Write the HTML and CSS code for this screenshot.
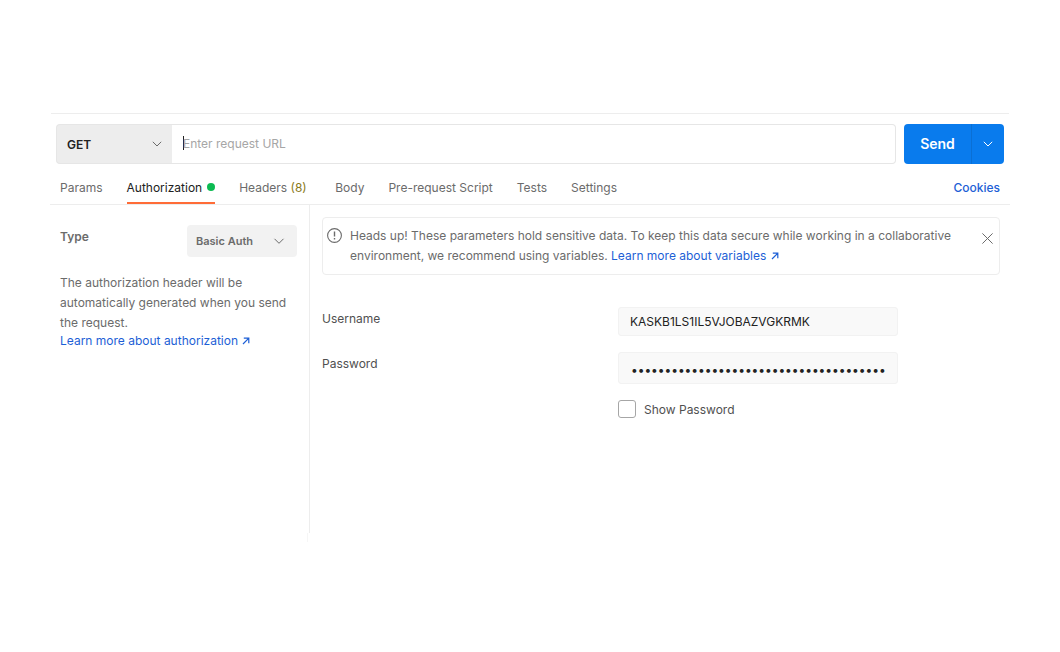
FILE: index.html
```html
<!DOCTYPE html>
<html lang="en">
<head>
<meta charset="utf-8">
<title>Request</title>
<link rel="stylesheet" href="styles.css">
</head>
<body>
<div class="app">
  <div class="url-row">
    <div class="url-group">
      <div class="method"><span>GET</span>
        <svg class="chev" width="12" height="12" viewBox="0 0 12 12"><path d="M1.8 3.8 6 8 10.2 3.8" fill="none" stroke="#6b6b6b" stroke-width="1"/></svg>
      </div>
      <div class="url-input"><span class="caret"></span><span>Enter request URL</span></div>
    </div>
    <div class="send">
      <span class="send-label">Send</span>
      <span class="send-arrow"><svg width="12" height="12" viewBox="0 0 12 12"><path d="M1.8 3.8 6 8 10.2 3.8" fill="none" stroke="#fff" stroke-width="1"/></svg></span>
    </div>
  </div>
  <div class="tabs">
    <span class="tab">Params</span>
    <span class="tab active">Authorization<i class="dot"></i></span>
    <span class="tab headers">Headers <em class="count">(8)</em></span>
    <span class="tab">Body</span>
    <span class="tab">Pre-request Script</span>
    <span class="tab">Tests</span>
    <span class="tab">Settings</span>
    <span class="cookies">Cookies</span>
  </div>
  <div class="main">
    <aside class="side">
      <div class="type-row">
        <span class="type-label">Type</span>
        <div class="select"><span>Basic Auth</span>
          <svg width="12" height="12" viewBox="0 0 12 12"><path d="M1.5 3.8 6 8.3 10.5 3.8" fill="none" stroke="#6b6b6b" stroke-width="1"/></svg>
        </div>
      </div>
      <p class="help">The authorization header will be automatically generated when you send the request.</p>
      <a class="link">Learn more about authorization <svg class="ext" width="8" height="8" viewBox="0 0 8 8"><path d="M1 7 6.6 1.4M1.8 1.2h5v5" fill="none" stroke="#1d5fd6" stroke-width="1.2"/></svg></a>
    </aside>
    <section class="content">
      <div class="notice">
        <svg class="info" width="15" height="15" viewBox="0 0 15 15"><circle cx="7.5" cy="7.5" r="6.9" fill="none" stroke="#6b6b6b" stroke-width="1.1"/><path d="M7.5 3.4v5M7.5 10v1.5" stroke="#6b6b6b" stroke-width="1.4" fill="none"/></svg>
        <p class="notice-text">Heads up! These parameters hold sensitive data. To keep this data secure while working in a collaborative environment, we recommend using variables. <a class="link">Learn more about variables <svg class="ext" width="8" height="8" viewBox="0 0 8 8"><path d="M1 7 6.6 1.4M1.8 1.2h5v5" fill="none" stroke="#1d5fd6" stroke-width="1.2"/></svg></a></p>
        <svg class="close" width="11" height="11" viewBox="0 0 11 11"><path d="M.4.4l10.2 10.2M10.6.4.4 10.6" stroke="#6b6b6b" stroke-width="1" fill="none"/></svg>
      </div>
      <div class="form">
        <label class="f-label">Username</label>
        <div class="field user">KASKB1LS1IL5VJOBAZVGKRMK</div>
        <label class="f-label pw">Password</label>
        <div class="field pass">••••••••••••••••••••••••••••••••••••••</div>
        <div class="check-row"><span class="box"></span><span>Show Password</span></div>
      </div>
    </section>
  </div>
</div>
</body>
</html>
```
FILE: styles.css
```css
* { box-sizing: border-box; }
html, body { margin: 0; background: #fff; }
body { font-family: Inter, "Liberation Sans", sans-serif; font-size: 12px; color: #6b6b6b; height: 652px; overflow: hidden; }
.app { margin: 113px 0 0 51px; width: 958px; border-top: 1px solid #ededed; }
.url-row { display: flex; gap: 8px; padding: 10px 5px 0; height: 50px; }
.url-group { flex: 1; display: flex; }
.method { width: 116px; background: #ededed; border: 1px solid #e6e6e6; border-right: 0; border-radius: 4px 0 0 4px; display: flex; align-items: center; justify-content: space-between; padding: 0 9px 0 10px; font-weight: 600; color: #212121; }
.url-input { flex: 1; display: flex; align-items: center; padding: 0 0 2px 11px; border: 1px solid #e6e6e6; border-left: 0; border-radius: 0 4px 4px 0; color: #a6a6a6; }
.caret { width: 1px; height: 14px; margin-right: -1px; background: #212121; }
.send { width: 100px; background: #097bed; border-radius: 4px; display: flex; color: #fff; font-weight: 600; }
.send-label { flex: 1; display: flex; align-items: center; justify-content: center; font-size: 14px; border-right: 1px solid #0a6fd4; padding-bottom: 1px; }
.send-arrow { width: 32px; display: flex; align-items: center; justify-content: center; }
.tabs { display: flex; align-items: flex-start; height: 41px; border-bottom: 1px solid #ededed; margin: 0 -1px; padding: 0 10px; gap: 24px; }
.tab { position: relative; height: 40px; padding-top: 6px; display: flex; align-items: center; gap: 5px; white-space: pre; }
.tab.active { color: #212121; }
.tab.active::after { content: ""; position: absolute; left: 0; right: 0; bottom: 0; height: 2px; background: #ff6c37; }
.tab.headers { gap: 0; padding-right: 4.5px; }
.dot { width: 8px; height: 8px; border-radius: 50%; background: #0cbb52; }
.count { font-style: normal; color: #8a7a1a; }
.cookies { margin-left: auto; height: 40px; padding-top: 6px; display: flex; align-items: center; color: #1d5fd6; font-weight: 500; }
.main { display: flex; height: 328px; }
.side { position: relative; width: 259px; border-right: 1px solid #ededed; padding: 20px 12px 0 9px; }
.side::after { content: ""; position: absolute; right: 1px; top: 100%; width: 1px; height: 9px; background: #f6f6f6; }
.type-row { display: flex; justify-content: space-between; align-items: flex-start; }
.type-label { font-weight: 600; line-height: 24px; }
.select { width: 110px; height: 32px; background: #f2f2f2; border-radius: 4px; display: flex; align-items: center; justify-content: space-between; padding: 0 12px 0 9px; font-size: 11px; font-weight: 600; }
.help { margin: 16px 0 0; line-height: 20px; }
.link { color: #1d5fd6; }
.side .link { display: block; line-height: 16px; white-space: nowrap; }
.ext { margin-left: 1px; }
.content { flex: 1; padding: 12px 9px 0 12px; }
.notice { display: flex; height: 58px; border: 1px solid #ededed; border-radius: 4px; padding: 8px 6px 0 4px; }
.info { flex: none; margin: 2px 8px 0 0; }
.notice-text { margin: 0; flex: 1; line-height: 20px; }
.close { flex: none; margin: 7px 0 0 0; }
.form { display: grid; grid-template-columns: 296px 280px; margin-top: 32px; }
.f-label { color: #505050; line-height: 24px; }
.field { background: #f9f9f9; border: 1px solid #f2f2f2; border-radius: 3px; padding: 0 11px; display: flex; align-items: center; color: #212121; }
.user { height: 29px; }
.f-label.pw { margin-top: 16px; }
.pass { height: 32px; margin-top: 16px; padding: 2px 11px 0 12px; letter-spacing: -0.05px; }
.check-row { grid-column: 2; display: flex; align-items: center; gap: 8px; margin-top: 16px; height: 18px; color: #505050; }
.box { width: 18px; height: 18px; border: 1px solid #a6a6a6; border-radius: 3px; background: #fff; }
```
